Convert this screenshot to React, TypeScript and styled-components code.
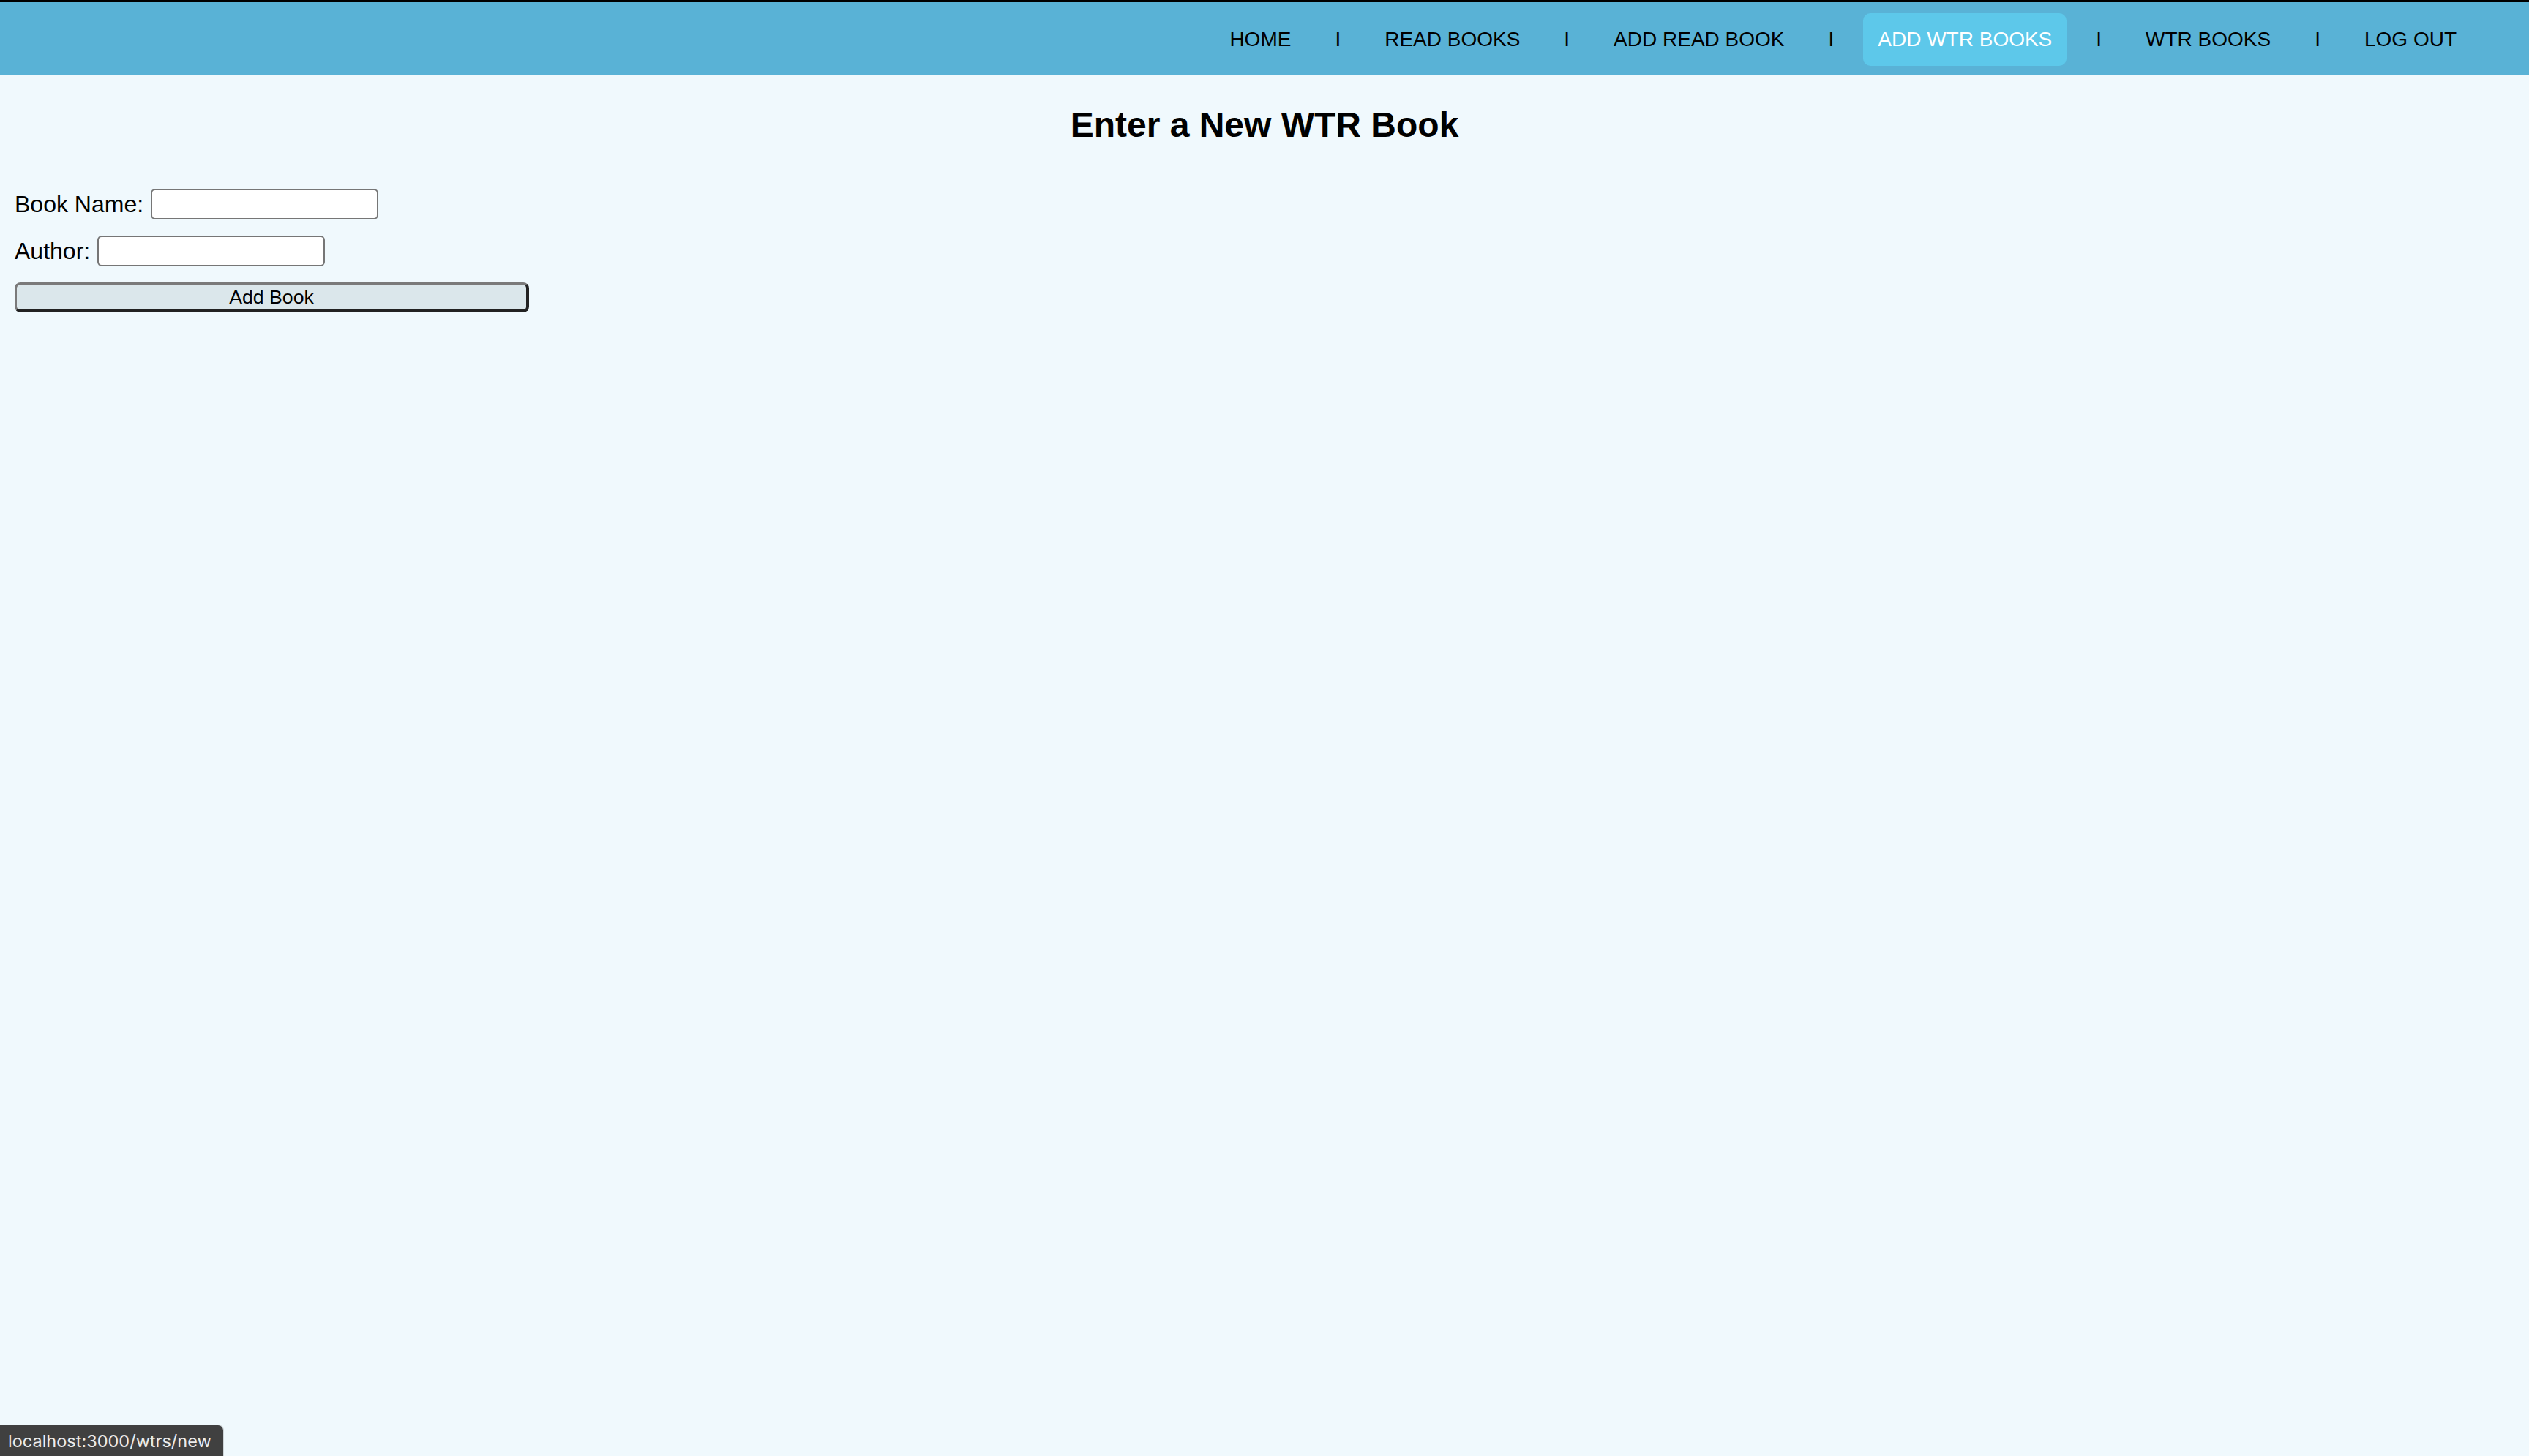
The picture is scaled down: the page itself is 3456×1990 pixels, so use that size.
import React from "react";
import styled, { createGlobalStyle } from "styled-components";

const GlobalStyle = createGlobalStyle`
  html, body {
    margin: 0;
    padding: 0;
    background: #f0f9fd;
  }
  body {
    font-family: "Liberation Sans", Arial, Helvetica, sans-serif;
    font-size: 32px;
    color: #000;
    min-height: 1990px;
  }
`;

const Page = styled.div`
  min-height: 1990px;
  background: #f0f9fd;
`;

const NavBar = styled.nav`
  display: flex;
  justify-content: flex-end;
  align-items: center;
  padding: 2px 79px 0 0;
  box-sizing: border-box;
  border-top: 3px solid #000;
  background: #59b2d6;
  height: 103px;
`;

const NavList = styled.div`
  display: flex;
  align-items: center;
  gap: 40px;
`;

const NavLink = styled.a<{ $active?: boolean }>`
  display: block;
  padding: 20px;
  line-height: 32px;
  font-size: 28px;
  color: ${(p) => (p.$active ? "#ffffff" : "#000000")};
  background: ${(p) => (p.$active ? "#5dc8ea" : "transparent")};
  border-radius: 10px;
  text-decoration: none;
  white-space: nowrap;
`;

const Separator = styled.span`
  font-size: 28px;
  line-height: 32px;
  color: #000;
`;

const Title = styled.h2`
  margin: 40px 0 60px;
  text-align: center;
  font-size: 48px;
  font-weight: bold;
  line-height: 55px;
`;

const Form = styled.form`
  display: flex;
  flex-direction: column;
  align-items: flex-start;
  gap: 22px;
  padding: 0 20px;
`;

const Row = styled.div`
  display: flex;
  align-items: center;
  gap: 10px;
  font-size: 32px;
  line-height: 37px;
`;

const Label = styled.label`
  font-size: 32px;
`;

const TextInput = styled.input`
  box-sizing: border-box;
  width: 311px;
  height: 42px;
  border: 2px solid #767676;
  border-radius: 6px;
  background: #fff;
  font-size: 26px;
  padding: 2px 6px;
  outline: none;
`;

const SubmitButton = styled.button`
  box-sizing: border-box;
  width: 703px;
  height: 41px;
  border-style: solid;
  border-width: 3px 4px 4px 3px;
  border-color: #7a7a7a #222 #222 #7a7a7a;
  border-radius: 8px;
  background: #dbe7eb;
  font-family: "Liberation Sans", Arial, Helvetica, sans-serif;
  font-size: 26.67px;
  color: #000;
  padding: 0;
  line-height: 30px;
`;

const StatusBar = styled.div`
  position: fixed;
  left: 0;
  bottom: 0;
  height: 43px;
  box-sizing: border-box;
  padding: 0 16px 0 11px;
  display: flex;
  align-items: center;
  background: #404040;
  color: #ececec;
  font-family: Inter, "Noto Sans", sans-serif;
  font-size: 23.5px;
  border-top-right-radius: 8px;
  border: 1px solid #cfd6d9;
  border-left: none;
  border-bottom: none;
`;

const links = [
  "HOME",
  "READ BOOKS",
  "ADD READ BOOK",
  "ADD WTR BOOKS",
  "WTR BOOKS",
  "LOG OUT",
];

export default function App() {
  return (
    <Page>
      <GlobalStyle />
      <NavBar>
        <NavList>
          {links.map((l, i) => (
            <React.Fragment key={l}>
              {i > 0 && <Separator>I</Separator>}
              <NavLink href="#" $active={l === "ADD WTR BOOKS"}>
                {l}
              </NavLink>
            </React.Fragment>
          ))}
        </NavList>
      </NavBar>
      <Title>Enter a New WTR Book</Title>
      <Form onSubmit={(e) => e.preventDefault()}>
        <Row>
          <Label htmlFor="bookName">Book Name:</Label>
          <TextInput id="bookName" type="text" />
        </Row>
        <Row>
          <Label htmlFor="author">Author:</Label>
          <TextInput id="author" type="text" />
        </Row>
        <SubmitButton type="submit">Add Book</SubmitButton>
      </Form>
      <StatusBar>localhost:3000/wtrs/new</StatusBar>
    </Page>
  );
}
